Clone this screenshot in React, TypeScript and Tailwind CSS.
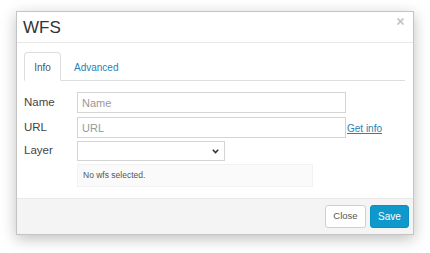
import { useState } from "react";

export default function App() {
  const [tab, setTab] = useState("info");

  return (
    <div className="h-[253px] w-[430px] bg-white pt-[11px] pl-[16px] font-['Liberation_Sans',Arial,sans-serif] text-[#333]">
      <div className="flex w-[398px] flex-col border border-[#c4c4c4] bg-white shadow-[0_4px_14px_rgba(0,0,0,0.25)]">
        {/* Header */}
        <div className="flex h-[31px] items-start justify-between border-b border-[#e8e8e8] pl-[6px] pr-[9px]">
          <h4 className="mt-[6px] text-[17px] leading-[20px] text-[#333]">WFS</h4>
          <button className="mt-[6px] p-0" aria-label="Close">
            <svg width="7" height="7" viewBox="0 0 7 7" className="text-[#c6c6c6]">
              <path d="M0.5 0.5 L6.5 6.5 M6.5 0.5 L0.5 6.5" stroke="currentColor" strokeWidth="1.8" />
            </svg>
          </button>
        </div>

        {/* Body */}
        <div className="pl-[7px] pr-[8px] pt-[9px] pb-[11px]">
          {/* Tabs */}
          <div className="flex h-[29px] border-b border-[#dddddd]">
            <button
              onClick={() => setTab("info")}
              className={
                tab === "info"
                  ? "-mb-px w-[37px] rounded-t-[4px] border border-[#dddddd] border-b-white bg-white pt-[1px] text-[10px] text-[#555]"
                  : "-mb-px w-[37px] rounded-t-[4px] border border-transparent pt-[1px] text-[10px] text-[#2a7fb4]"
              }
            >
              Info
            </button>
            <button
              onClick={() => setTab("advanced")}
              className={
                tab === "advanced"
                  ? "-mb-px ml-[2px] rounded-t-[4px] border border-[#dddddd] border-b-white bg-white px-[10px] pt-[1px] text-[10px] text-[#555]"
                  : "-mb-px ml-[2px] rounded-t-[4px] border border-transparent px-[10px] pt-[1px] text-[10px] text-[#2a7fb4]"
              }
            >
              Advanced
            </button>
          </div>

          {/* Form */}
          <div className="flex flex-col pt-[11px]">
            <div className="flex h-[21px] items-center">
              <label className="w-[53px] text-[11.5px] text-[#444]">Name</label>
              <input
                placeholder="Name"
                className="h-[21px] w-[269px] border border-[#d4d4d4] px-[4px] text-[11px] text-[#333] placeholder:text-[#999] outline-none"
              />
            </div>
            <div className="mt-[4px] flex h-[21px] items-center">
              <label className="w-[53px] text-[11.5px] text-[#444]">URL</label>
              <input
                placeholder="URL"
                className="h-[21px] w-[269px] border border-[#d4d4d4] px-[4px] text-[11px] text-[#333] placeholder:text-[#999] outline-none"
              />
              <a href="#" className="ml-[1px] pt-[2px] text-[10px] text-[#2a7fb4] underline">
                Get info
              </a>
            </div>
            <div className="mt-[3px] flex h-[20px] items-center">
              <label className="w-[53px] text-[11.5px] text-[#444]">Layer</label>
              <div className="relative">
                <select className="block h-[20px] w-[148px] appearance-none border border-[#d4d4d4] bg-white px-[4px] text-[11px] outline-none" />
                <svg
                  width="7"
                  height="5"
                  viewBox="0 0 7 5"
                  className="pointer-events-none absolute right-[6px] top-[8px]"
                >
                  <path d="M0.8 0.8 L3.5 3.6 L6.2 0.8" stroke="#333" strokeWidth="1.6" fill="none" />
                </svg>
              </div>
            </div>
            <div className="ml-[53px] mt-[3px] flex h-[23px] w-[236px] items-center border border-[#f2f2f2] bg-[#fafafa] px-[5px] text-[8.5px] text-[#555]">
              No wfs selected.
            </div>
          </div>
        </div>

        {/* Footer */}
        <div className="flex h-[36px] items-center justify-end gap-[4px] border-t border-[#e8e8e8] bg-[#f4f4f4] pr-[4px]">
          <button className="h-[23px] w-[41px] rounded-[3px] border border-[#d0d0d0] bg-white text-[9.5px] text-[#555]">
            Close
          </button>
          <button className="h-[23px] w-[39px] rounded-[3px] border border-[#0b8fc2] bg-[#0e98cc] text-[10px] text-white">
            Save
          </button>
        </div>
      </div>
    </div>
  );
}
